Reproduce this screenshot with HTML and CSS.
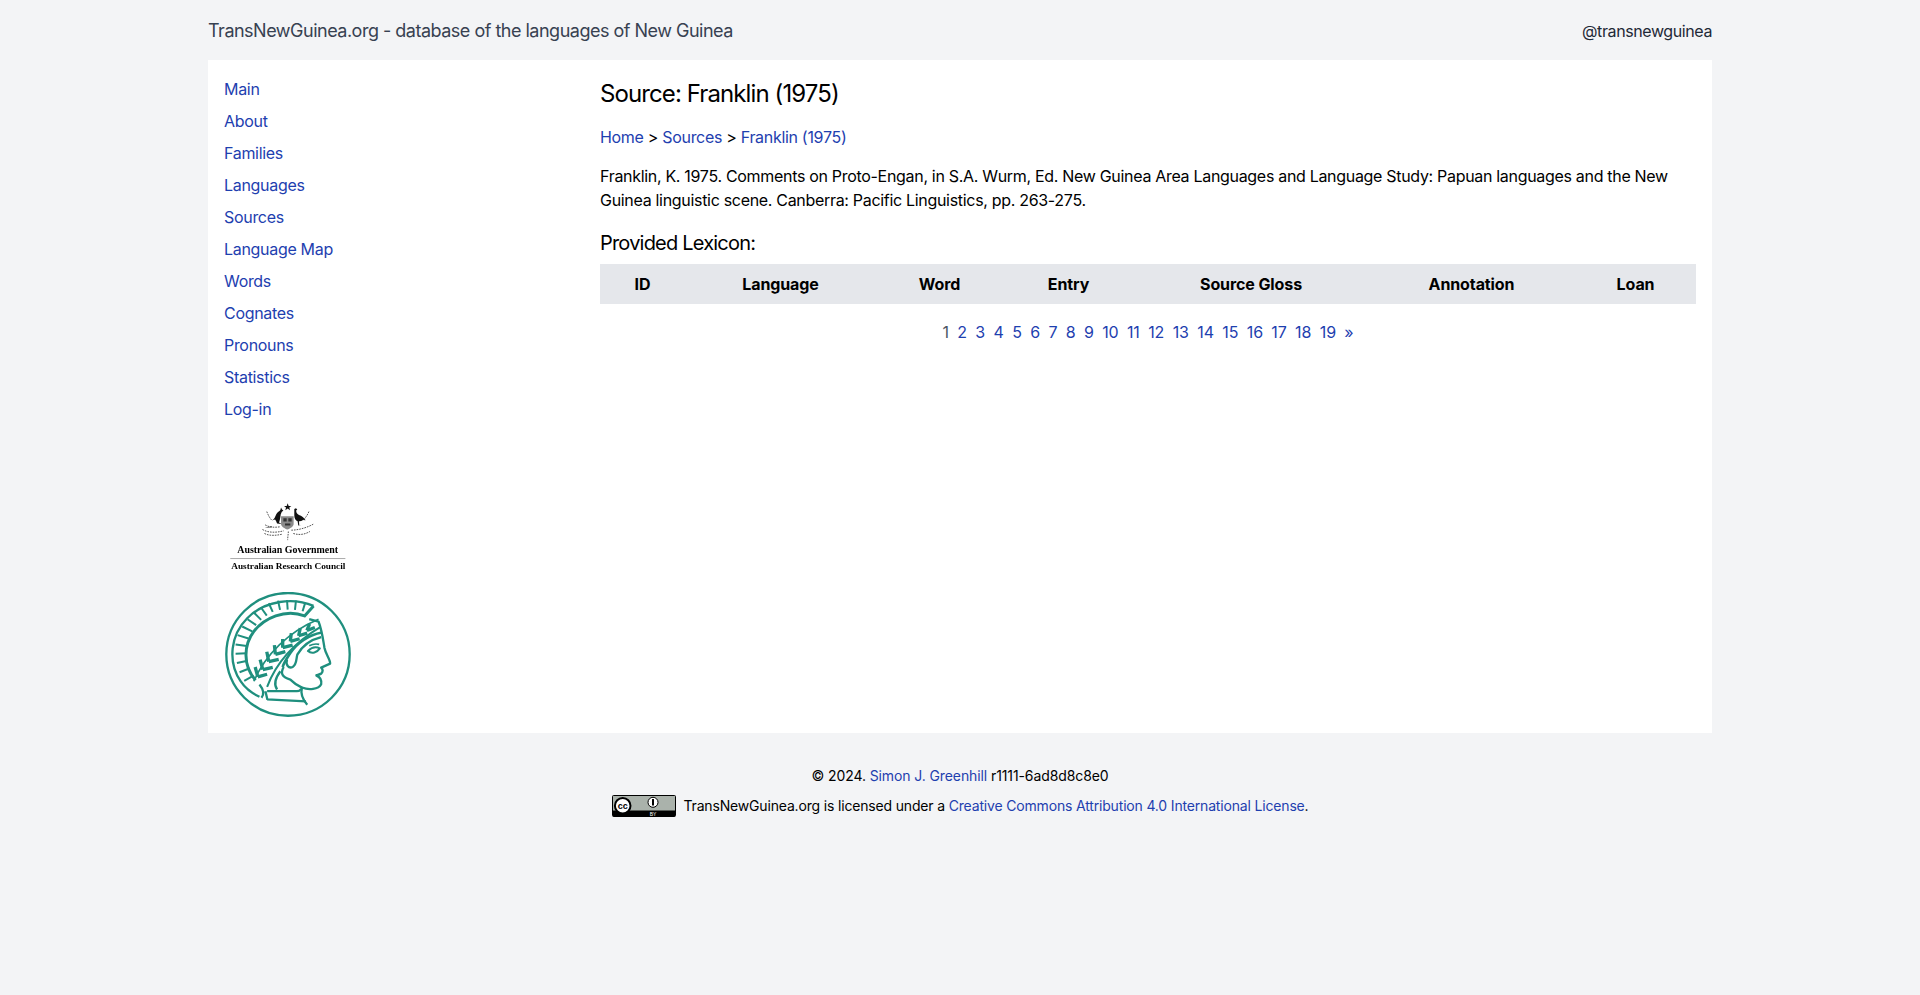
FILE: index.html
```html
<!DOCTYPE html>
<html lang="en">
<head>
    <meta charset="UTF-8">
    <title>Source: Franklin (1975)</title>
    <link rel="stylesheet" href="styles.css">
</head>
<body>
    <header class="topbar">
        <a class="brand" href="#">TransNewGuinea.org - database of the languages of New Guinea</a>
        <a class="handle" href="#">@transnewguinea</a>
    </header>

    <div class="panel">
        <aside class="sidebar">
            <nav class="nav">
                <a href="#">Main</a>
                <a href="#">About</a>
                <a href="#">Families</a>
                <a href="#">Languages</a>
                <a href="#">Sources</a>
                <a href="#">Language Map</a>
                <a href="#">Words</a>
                <a href="#">Cognates</a>
                <a href="#">Pronouns</a>
                <a href="#">Statistics</a>
                <a href="#">Log-in</a>
            </nav>

            <svg class="logo-arc" viewBox="0 0 378 228" width="126" height="76">
                <!-- crest -->
                <path d="M188 13l3 8 8 0-6 5 2 8-7-5-7 5 2-8-6-5 8 0z" fill="#111"/>
                <path d="M150 62l-10 3c8-3 10-12 14-20 3-6 9-8 12-12l2-7 3 6 4 3-5 4-3 8c-1 8-2 16-5 24l8 4-14-1-3-8z M140 85l-22 2 22-5z" fill="#111"/>
                <path d="M208 30l5-2 4 4-3 2c-1 6 2 11 8 14 8 2 16 8 20 16l-8-1c-4 3-8 4-12 4l1 12h7l-10 1-2-13c-6-2-10-8-10-17z" fill="#111"/>
                <path d="M168 52h38v24c0 6-12 14-19 16-7-2-19-10-19-16z" fill="#8a8a8a"/>
                <path d="M175 58h10v10h-10zM190 58h10v10h-10zM180 74h16v6h-16z" fill="#333"/>
                <g fill="none" stroke="#555" stroke-width="3" stroke-dasharray="5 3">
                    <path d="M125 38c4 10 8 18 15 26M252 38c-4 10-10 18-17 26"/>
                    <path d="M112 92c18 10 40 10 64 4M265 76c-18 10-44 18-68 18"/>
                    <path d="M120 78c14 8 28 8 44 6M118 104c16 8 36 6 54 2M205 104c20 6 36 2 50-6M190 98c0 8-2 16-2 26"/>
                </g>
                <text class="arc-gov" x="188" y="162" text-anchor="middle" textLength="304">Australian Government</text>
                <rect x="15" y="178" width="347" height="3" fill="#aaa"/>
                <text class="arc-council" x="190" y="212" text-anchor="middle" textLength="344">Australian Research Council</text>
            </svg>

            <svg class="logo-mpg" viewBox="6 6 384 378" width="128" height="126">
                <g fill="none" stroke="#1f8f7e" stroke-linejoin="round">
                    <ellipse cx="198" cy="194" rx="186" ry="185" stroke-width="7"/>
                    <!-- helmet -->
                    <path d="M275 48C215 22 130 30 75 85C25 135 15 215 55 275C68 295 90 312 112 322" stroke-width="7"/>
                    <path d="M275 48L248 78C190 55 125 85 95 125C65 165 60 225 100 272" stroke-width="9"/>
                    <path d="M250 38l-8 26M222 32l-3 28M195 30l2 29M168 32l6 28M140 40l12 26M116 52l18 25M95 68l22 22M76 88l26 18M60 110l30 15M46 136l33 10M40 164l34 5M40 192l33-1M44 220l32-7M52 248l31-12M66 274l28-16" stroke-width="6"/>
                    <!-- laurel -->
                    <path d="M95 275C130 195 200 125 290 88" stroke-width="5"/>
                    <path d="M135 292C160 225 215 160 295 112" stroke-width="6"/>
                    <path d="M107 262l-8-30M122 240l-8-30M140 216l-6-30M160 194l-3-28M182 174l0-26M205 155l3-25M230 138l5-23M255 122l8-20" stroke-width="10"/>
                    <path d="M107 262l28-8M122 240l30-7M140 216l30-7M160 194l30-8M182 174l30-8M205 155l28-8M230 138l26-8M255 122l24-9" stroke-width="10"/>
                    <!-- face -->
                    <path d="M262 88L290 95C300 120 304 150 308 175C312 195 326 210 325 222L298 234C304 240 304 246 298 252C290 256 282 256 284 258C294 262 300 270 298 284C290 300 260 302 240 294C236 310 242 330 256 346" stroke-width="7"/>
                    <path d="M300 128C260 135 225 160 205 190C195 205 185 220 182 232" stroke-width="8"/>
                    <path d="M298 142C265 150 240 170 226 195C222 210 225 225 212 232C200 238 190 225 195 210" stroke-width="7"/>
                    <path d="M258 184c10-10 24-14 36-8c-8 12-24 18-36 8z" stroke-width="6"/>
                    <path d="M262 168c10-5 22-6 30-4" stroke-width="5"/>
                    <path d="M185 232C175 250 178 262 205 270C220 285 232 290 240 294" stroke-width="7"/>
                    <path d="M175 245C160 265 155 285 165 300M135 305H225C232 305 235 302 238 298M135 330L252 336M130 305l6 26M112 285C120 295 130 310 118 325" stroke-width="7"/>
                </g>
            </svg>
        </aside>

        <main class="content">
            <h1>Source: Franklin (1975)</h1>
            <p class="crumbs"><a href="#">Home</a> &gt; <a href="#">Sources</a> &gt; <a href="#">Franklin (1975)</a></p>
            <p class="citation">Franklin, K. 1975. Comments on Proto-Engan, in S.A. Wurm, Ed. New Guinea Area Languages and Language Study: Papuan languages and the New Guinea linguistic scene. Canberra: Pacific Linguistics, pp. 263-275.</p>
            <h2>Provided Lexicon:</h2>
            <table class="lexicon">
                <thead>
                    <tr>
                        <th class="col-id">ID</th>
                        <th class="col-language">Language</th>
                        <th class="col-word">Word</th>
                        <th class="col-entry">Entry</th>
                        <th class="col-gloss">Source Gloss</th>
                        <th class="col-annotation">Annotation</th>
                        <th class="col-loan">Loan</th>
                    </tr>
                </thead>
            </table>
            <div class="pages">
                <span>1</span>
                <a href="#">2</a>
                <a href="#">3</a>
                <a href="#">4</a>
                <a href="#">5</a>
                <a href="#">6</a>
                <a href="#">7</a>
                <a href="#">8</a>
                <a href="#">9</a>
                <a href="#">10</a>
                <a href="#">11</a>
                <a href="#">12</a>
                <a href="#">13</a>
                <a href="#">14</a>
                <a href="#">15</a>
                <a href="#">16</a>
                <a href="#">17</a>
                <a href="#">18</a>
                <a href="#">19</a>
                <a href="#">&raquo;</a>
            </div>
        </main>
    </div>

    <footer class="footer">
        <p class="copyright">&copy; 2024. <a href="#">Simon J. Greenhill</a> r1111-6ad8d8c8e0</p>
        <p class="license">
            <svg class="cc-badge" viewBox="0 0 64 22" width="64" height="22">
                <rect x="0.500" y="0.500" width="63" height="21" rx="1" fill="#aab2ab" stroke="#000"/>
                <path d="M1 15.500h62v5.500a.500.500 0 0 1-.500.500H1.500a.500.500 0 0 1-.500-.500z" fill="#000"/>
                <circle cx="10.700" cy="10.700" r="7.800" fill="#fff" stroke="#000" stroke-width="2"/>
                <text class="cc-mark" x="10.700" y="13.700" text-anchor="middle">cc</text>
                <circle cx="41" cy="7.300" r="5" fill="#fff" stroke="#000" stroke-width="1"/>
                <path d="M41 4v6.500" stroke="#000" stroke-width="2"/>
                <text class="cc-by" x="41" y="20.500" text-anchor="middle">BY</text>
            </svg>
            <span>TransNewGuinea.org is licensed under a <a href="#">Creative Commons Attribution 4.0 International License</a>.</span>
        </p>
    </footer>
</body>
</html>
```

FILE: styles.css
```css
* {
    box-sizing: border-box;
}
body {
    margin: 0;
    background-color: #f3f4f6;
    color: #000;
    font-family: Inter, "Liberation Sans", sans-serif;
    font-size: 16px;
    line-height: 24px;
    letter-spacing: -0.31px;
}
a {
    color: #1e40af;
    text-decoration: none;
}
.topbar {
    display: flex;
    justify-content: space-between;
    align-items: center;
    width: 1504px;
    height: 60px;
    padding-top: 1px;
    margin: 0 auto;
}
.brand {
    color: #374151;
    font-size: 18px;
    letter-spacing: -0.5px;
}
.handle {
    color: #1f2937;
    letter-spacing: -0.4px;
}
.panel {
    display: flex;
    width: 1504px;
    height: 673px;
    margin: 0 auto;
    background-color: #fff;
}
.sidebar {
    display: flex;
    flex-direction: column;
    align-items: flex-start;
    width: 392px;
    padding: 17px 16px 16px;
}
.nav {
    display: flex;
    flex-direction: column;
    gap: 8px;
    margin-bottom: 78px;
}
.logo-arc {
    margin: 0 0 17px 1px;
    filter: blur(0.4px);
}
.logo-mpg {
    filter: blur(0.4px);
}
.arc-gov {
    font-family: "Liberation Serif", serif;
    font-size: 30px;
    font-weight: bold;
    letter-spacing: 0;
}
.arc-council {
    font-family: "Liberation Serif", serif;
    font-size: 28px;
    font-weight: bold;
    letter-spacing: 0;
}
.content {
    flex: 1;
    padding: 16px 16px 16px 0;
}
h1 {
    margin: 0;
    padding-top: 2px;
    font-size: 24px;
    font-weight: 400;
    line-height: 32px;
    letter-spacing: -0.9px;
}
.crumbs {
    margin: 15px 0 0;
}
.citation {
    margin: 15px 0 0;
}
h2 {
    margin: 17px 0 0;
    font-size: 20px;
    font-weight: 400;
    line-height: 28px;
    letter-spacing: -0.8px;
}
.lexicon {
    width: 100%;
    margin-top: 7px;
    border-collapse: collapse;
    table-layout: fixed;
}
.lexicon th {
    height: 40px;
    padding: 0;
    background-color: #e5e7eb;
    font-weight: 700;
    letter-spacing: -0.1px;
}
.lexicon th + th {
    padding-left: 16px;
}
.col-id { width: 85px; }
.col-language { width: 175px; }
.col-word { width: 143px; }
.col-entry { width: 115px; }
.col-gloss { width: 250px; }
.col-annotation { width: 191px; }
.col-loan { width: 137px; }
.pages {
    display: flex;
    justify-content: center;
    gap: 8.4px;
    margin-top: 16px;
    letter-spacing: -0.1px;
}
.pages span {
    color: #4b5563;
}
.footer {
    padding-top: 33px;
    font-size: 14px;
    line-height: 20px;
    text-align: center;
}
.footer p {
    margin: 0;
}
.copyright {
    letter-spacing: -0.1px;
}
.footer .license {
    display: flex;
    justify-content: center;
    align-items: center;
    gap: 8px;
    margin-top: 9px;
    letter-spacing: -0.17px;
}
.cc-mark {
    font-family: "Liberation Sans", sans-serif;
    font-size: 9px;
    font-weight: bold;
    letter-spacing: 0;
}
.cc-by {
    fill: #fff;
    font-family: "Liberation Sans", sans-serif;
    font-size: 5px;
    letter-spacing: 0;
}
```
